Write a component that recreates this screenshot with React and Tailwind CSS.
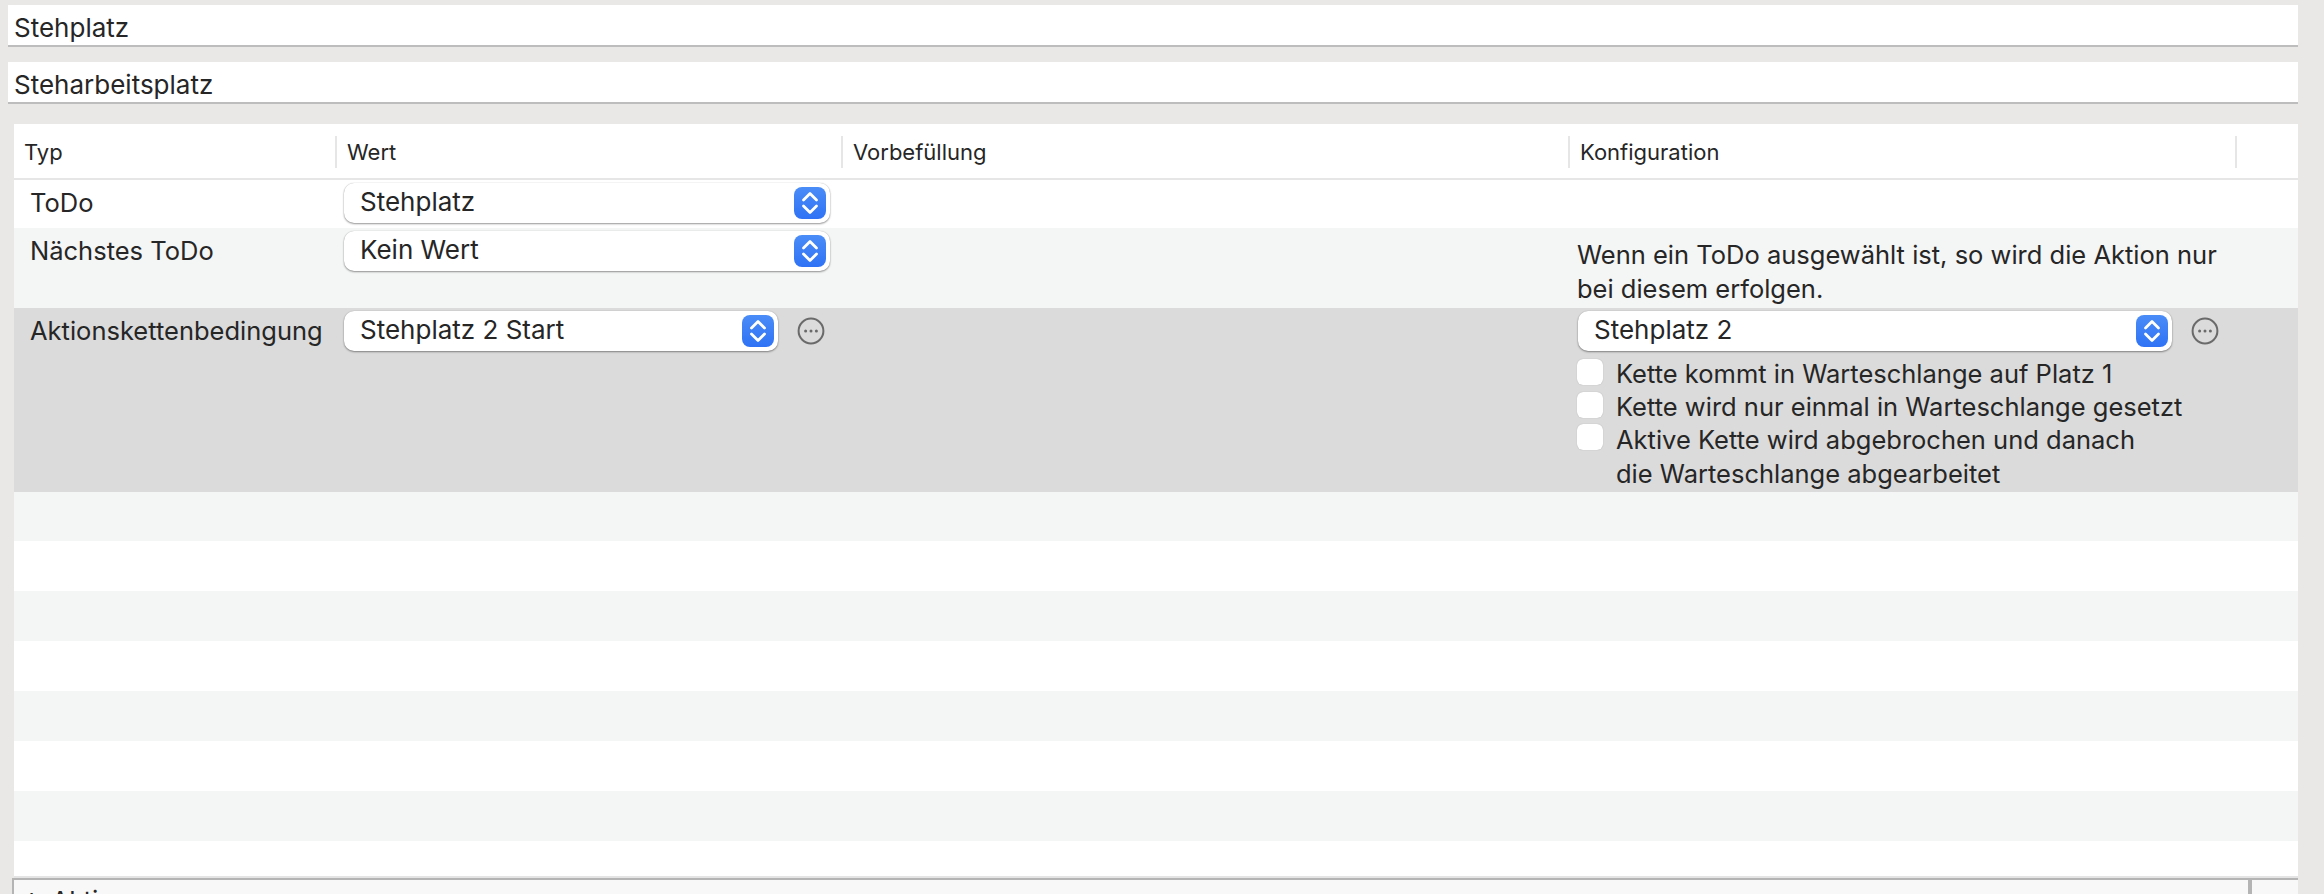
const Chevrons = () => (
  <span className="flex h-8 w-8 shrink-0 items-center justify-center rounded-lg bg-gradient-to-b from-[#4a8cf7] to-[#2f72f5]">
    <svg width="32" height="32" viewBox="0 0 32 32" fill="none" stroke="white" strokeWidth="2.8" strokeLinecap="round" strokeLinejoin="round">
      <path d="M9.5 13 L16 6.5 L22.5 13" />
      <path d="M9.5 19 L16 25.5 L22.5 19" />
    </svg>
  </span>
);

const More = () => (
  <svg width="28" height="28" viewBox="0 0 28 28" fill="none" className="shrink-0">
    <circle cx="14" cy="14" r="12.4" stroke="#6a6a6a" strokeWidth="2" />
    <circle cx="8.6" cy="14" r="1.5" fill="#6a6a6a" />
    <circle cx="14" cy="14" r="1.5" fill="#6a6a6a" />
    <circle cx="19.4" cy="14" r="1.5" fill="#6a6a6a" />
  </svg>
);

const Select = ({ label, className }) => (
  <div className={`flex h-10 items-center justify-between rounded-[10px] bg-white pl-4 pr-1 text-[26px] shadow-[0_1px_2px_rgba(0,0,0,0.4),0_0_1px_rgba(0,0,0,0.25)] ${className}`}>
    <span className="pb-[2px]">{label}</span>
    <Chevrons />
  </div>
);

const Checkbox = ({ children, leading = 'leading-[32.5px]' }) => (
  <div className="flex items-start gap-[13px]">
    <span className="mt-px h-[26px] w-[26px] shrink-0 rounded-[6px] bg-white shadow-[0_0_1px_rgba(0,0,0,0.3)]" />
    <span className={leading}>{children}</span>
  </div>
);

const cols = 'grid grid-cols-[321px_506px_727px_667px_63px]';

const Field = ({ children }) => (
  <div className="flex h-[42px] items-center border-b-2 border-[#bdbdbd] bg-white pl-[6px] pt-[5px] text-[26px]">{children}</div>
);

const HeadCell = ({ children }) => (
  <div className="flex h-8 items-center border-l-2 border-[#e6e6e6] pl-[10px] first:border-l-0">{children}</div>
);

export default function App() {
  return (
    <div className="h-[894px] w-[2324px] overflow-hidden bg-[#e9e8e6] pl-2 pr-[26px] pt-[5px] font-['Inter',sans-serif] text-[25.5px] leading-[34px] text-[#262626]">
      <div className="flex flex-col gap-[15px]">
        <Field>Stehplatz</Field>
        <Field>Steharbeitsplatz</Field>
      </div>

      <div className="ml-[6px] mt-[20px] bg-white">
        <div className={`${cols} h-[56px] items-center border-b-2 border-[#e6e6e6] pt-[2px] text-[22px]`}>
          <HeadCell>Typ</HeadCell>
          <HeadCell>Wert</HeadCell>
          <HeadCell>Vorbefüllung</HeadCell>
          <HeadCell>Konfiguration</HeadCell>
          <HeadCell />
        </div>

        <div className={`${cols} h-12 bg-white`}>
          <div className="pl-4 pt-[6px]">ToDo</div>
          <div className="pl-[9px] pr-[11px] pt-[3px]"><Select label="Stehplatz" /></div>
        </div>

        <div className={`${cols} h-20 bg-[#f4f5f5]`}>
          <div className="pl-4 pt-[6px]">Nächstes ToDo</div>
          <div className="pl-[9px] pr-[11px] pt-[3px]"><Select label="Kein Wert" /></div>
          <div />
          <div className="col-span-2 whitespace-nowrap pl-[9px] pt-[10px]">
            Wenn ein ToDo ausgewählt ist, so wird die Aktion nur<br />bei diesem erfolgen.
          </div>
        </div>

        <div className={`${cols} h-[184px] bg-[#dbdbdb]`}>
          <div className="whitespace-nowrap pl-4 pt-[6px]">Aktionskettenbedingung</div>
          <div className="flex items-start gap-[19px] pl-[9px] pt-[3px]">
            <Select label="Stehplatz 2 Start" className="w-[434px]" />
            <span className="pt-[6px]"><More /></span>
          </div>
          <div />
          <div className="col-span-2 pl-[10px] pt-[3px]">
            <div className="flex items-start gap-[19px]">
              <Select label="Stehplatz 2" className="w-[594px]" />
              <span className="pt-[6px]"><More /></span>
            </div>
            <div className="-ml-px mt-[7px] flex w-[660px] flex-col">
              <Checkbox>Kette kommt in Warteschlange auf Platz 1</Checkbox>
              <Checkbox>Kette wird nur einmal in Warteschlange gesetzt</Checkbox>
              <Checkbox leading="leading-[33.5px]">
                Aktive Kette wird abgebrochen und danach<br />die Warteschlange abgearbeitet
              </Checkbox>
            </div>
          </div>
        </div>

        <div className="h-[49px] bg-[#f4f5f5]" />
        <div className="h-[50px] bg-white" />
        <div className="h-[50px] bg-[#f4f5f5]" />
        <div className="h-[50px] bg-white" />
        <div className="h-[50px] bg-[#f4f5f5]" />
        <div className="h-[50px] bg-white" />
        <div className="h-[50px] bg-[#f4f5f5]" />
        <div className="h-[37px] border-b-2 border-[#e4e4e4] bg-white" />
      </div>

      <div className="ml-1 flex h-[60px] border-l-2 border-t-2 border-[#b4b4b4] bg-[#f8f8f8]">
        <div className="flex w-[2238px] gap-[11px] border-r-4 border-[#b4b4b4] pl-[9px] pt-[4px] text-[26px]">
          <span className="-mt-[4px]">+</span>
          <span>Aktion</span>
        </div>
      </div>
    </div>
  );
}
